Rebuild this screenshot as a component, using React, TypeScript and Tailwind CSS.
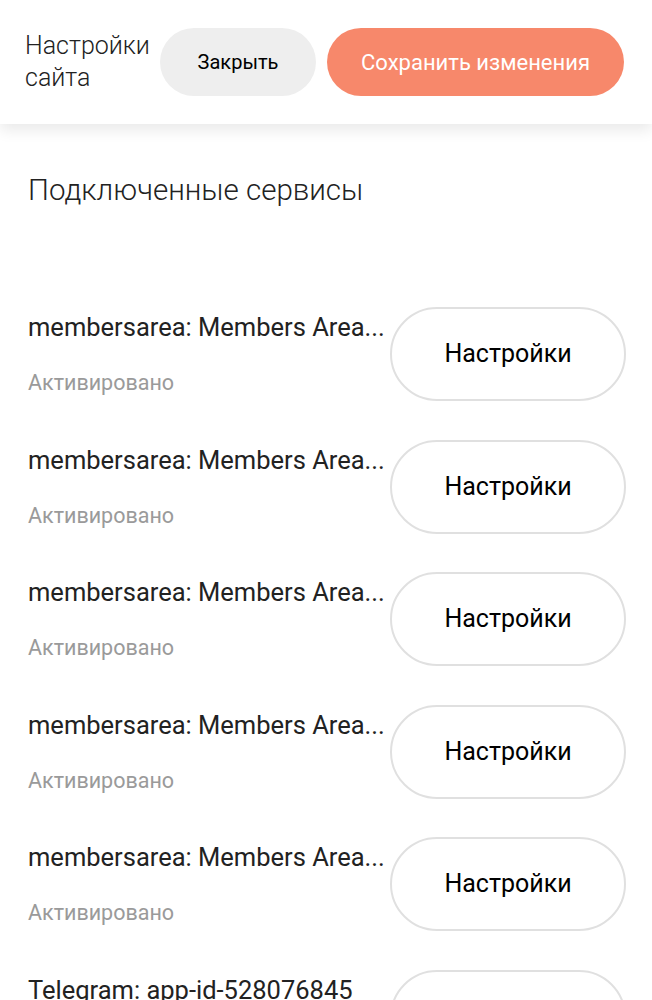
const services = [
  { name: 'membersarea: Members Area...', status: 'Активировано' },
  { name: 'membersarea: Members Area...', status: 'Активировано' },
  { name: 'membersarea: Members Area...', status: 'Активировано' },
  { name: 'membersarea: Members Area...', status: 'Активировано' },
  { name: 'membersarea: Members Area...', status: 'Активировано' },
  { name: 'Telegram: app-id-528076845', status: 'Активировано' },
];

const App = () => {
  return (
    <div className="min-h-screen bg-white font-['Roboto',sans-serif] text-[#1a1a1a]">
      <header className="relative z-10 flex h-[124px] items-center pl-[25px] pr-[28px] shadow-[0_6px_14px_rgba(0,0,0,0.09)]">
        <div className="w-[135px] text-[25px] font-light leading-[32px] text-[#222]">
          Настройки
          <br />
          сайта
        </div>
        <button className="h-[68px] w-[156px] rounded-full bg-[#eeeeee] text-[20px] text-black">
          Закрыть
        </button>
        <button className="ml-[11px] h-[68px] w-[297px] rounded-full bg-[#f7886b] text-[22px] text-white">
          Сохранить изменения
        </button>
      </header>

      <main className="px-[28px]">
        <h2 className="mt-[46px] text-[29.5px] font-light leading-[40px] text-[#222]">
          Подключенные сервисы
        </h2>

        <div className="mt-[97px] flex flex-col gap-[38.5px]">
          {services.map((s, i) => (
            <div key={i} className="flex items-center justify-between">
              <div className="min-w-0">
                <div className="whitespace-nowrap text-[25.5px] leading-[32px] text-[#222]">{s.name}</div>
                <div className="mt-[26px] text-[21.5px] leading-[28px] text-[#9a9a9a]">{s.status}</div>
              </div>
              <button className="-mr-[2px] h-[94px] w-[236px] shrink-0 rounded-full border-2 border-[#e0e0e0] bg-white text-[25px] text-black">
                Настройки
              </button>
            </div>
          ))}
        </div>
      </main>
    </div>
  );
};

export default App;
